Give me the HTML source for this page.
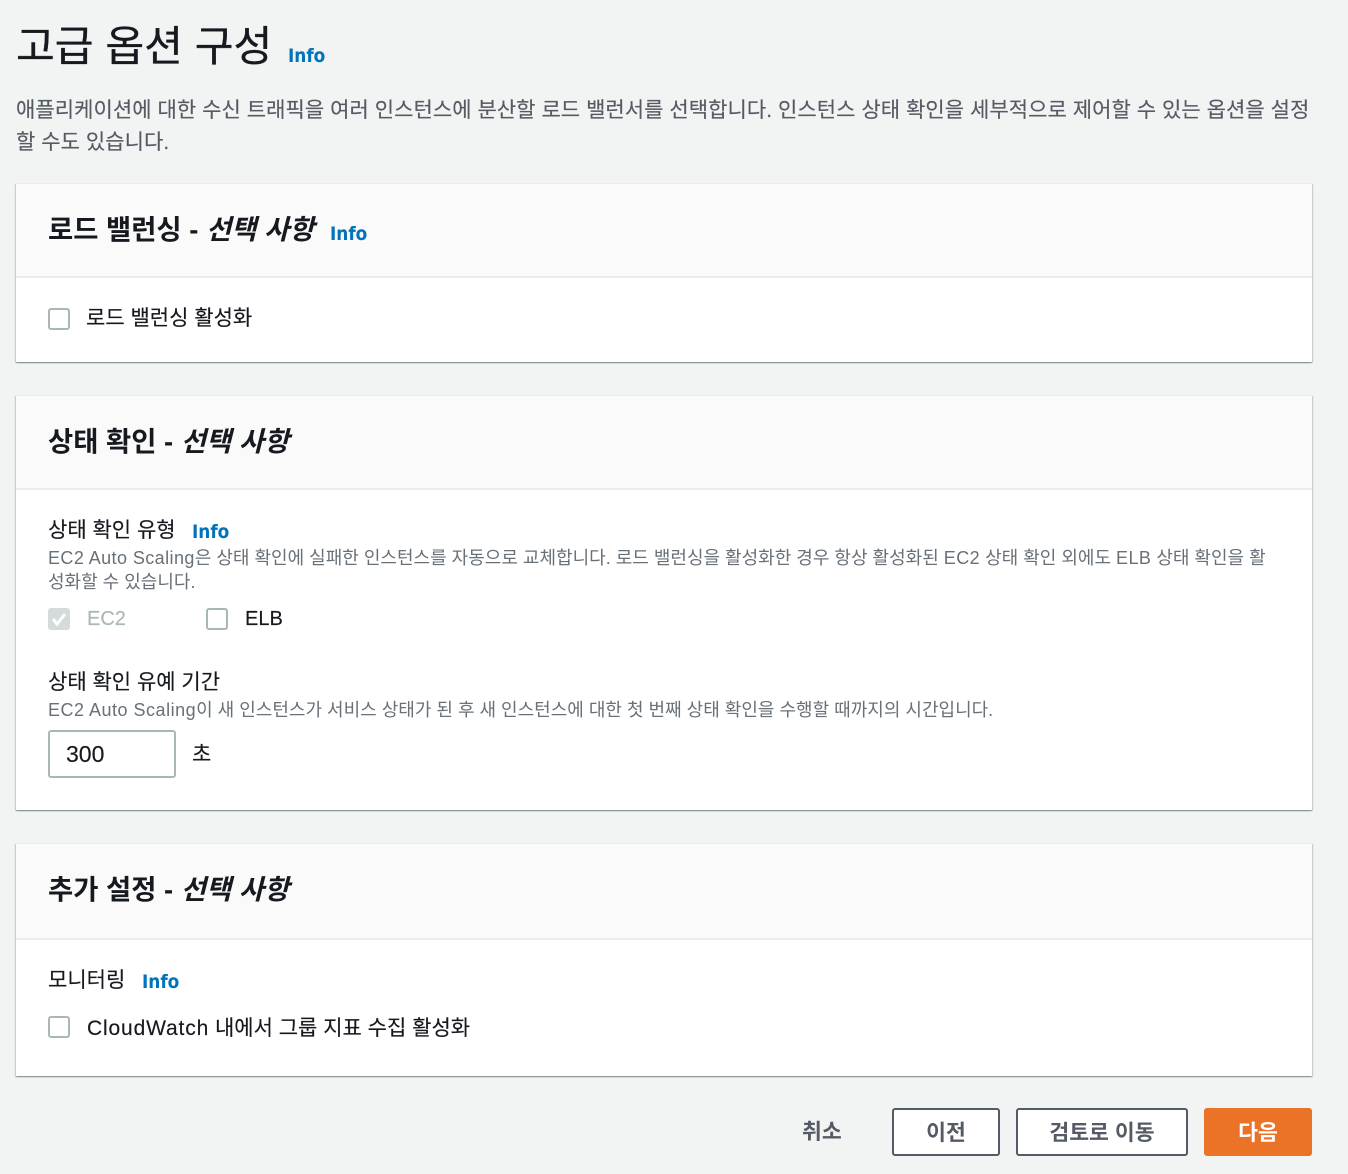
<!DOCTYPE html>
<html lang="ko"><head><meta charset="utf-8">
<style>
html,body{margin:0;padding:0;width:1348px;height:1174px;overflow:hidden;background:#f2f3f3}
body{position:relative;font-family:"Liberation Sans","Noto Sans CJK KR",sans-serif;color:#16191f}
.t{position:absolute;white-space:nowrap;line-height:32px}
.info{color:#0073bb;font-weight:700;font-family:"DejaVu Sans","Liberation Sans",sans-serif;font-stretch:condensed;font-size:18.8px}
.d{color:#545b64;font-size:21px;letter-spacing:.05px;-webkit-text-stroke:.15px #545b64}
.s{color:#687078;font-size:18px;line-height:24px}
.s b{font-weight:400;letter-spacing:.42px}
.l{font-size:21px;-webkit-text-stroke:.15px currentColor}
.l b{font-weight:400;letter-spacing:.85px}
.e{font-size:20px}
.h{font-size:27.4px;font-weight:700}
.h i{font-style:italic}
.card{position:absolute;left:16px;width:1296px;background:#fff;box-shadow:0 1px 1px 0 rgba(0,28,36,.3),1px 1px 1px 0 rgba(0,28,36,.15),-1px 1px 1px 0 rgba(0,28,36,.15);border-top:1px solid #eaeded;box-sizing:border-box}
.head{position:absolute;left:0;top:0;right:0;background:#fafafa;border-bottom:2px solid #eaeded;box-sizing:border-box}
.cb{position:absolute;width:22px;height:22px;box-sizing:border-box;border:2px solid #aab7b8;border-radius:3px;background:#fff}
.btn{position:absolute;top:1108px;height:48px;box-sizing:border-box;border:2px solid #545b64;border-radius:3px;background:#fff;color:#545b64;font-weight:700;font-size:21.6px;line-height:46px;text-align:center}
</style></head><body>
<div class="t" style="left:16px;top:19px;font-size:42.2px;line-height:56px;color:#16191f;-webkit-text-stroke:.35px #16191f">고급 옵션 구성</div>
<div class="t info" style="left:288px;top:41px">Info</div>
<div class="t d" style="left:16px;top:95px">애플리케이션에 대한 수신 트래픽을 여러 인스턴스에 분산할 로드 밸런서를 선택합니다. 인스턴스 상태 확인을 세부적으로 제어할 수 있는 옵션을 설정</div>
<div class="t d" style="left:16px;top:127px">할 수도 있습니다.</div>

<div class="card" style="top:183px;height:179px"><div class="head" style="height:94px"></div></div>
<div class="t h" style="left:48px;top:214px">로드 밸런싱 - <i>선택 사항</i></div>
<div class="t info" style="left:330px;top:219px">Info</div>
<div class="cb" style="left:48px;top:308px"></div>
<div class="t l" style="left:86px;top:303px">로드 밸런싱 활성화</div>

<div class="card" style="top:395px;height:415px"><div class="head" style="height:94px"></div></div>
<div class="t h" style="left:48px;top:426px">상태 확인 - <i>선택 사항</i></div>
<div class="t l" style="left:48px;top:515px">상태 확인 유형</div>
<div class="t info" style="left:192px;top:517px">Info</div>
<div class="t s" style="left:48px;top:546px"><b>EC2 Auto Scaling</b>은 상태 확인에 실패한 인스턴스를 자동으로 교체합니다. 로드 밸런싱을 활성화한 경우 항상 활성화된 <b>EC2</b> 상태 확인 외에도 <b>ELB</b> 상태 확인을 활</div>
<div class="t s" style="left:48px;top:570px">성화할 수 있습니다.</div>
<div class="cb" style="left:48px;top:608px;background:#d5dbdb;border-color:#d5dbdb"><svg width="18" height="18" viewBox="0 0 18 18" style="position:absolute;left:0;top:0"><path d="M3 9l4 5 8-10" fill="none" stroke="#fff" stroke-width="3"/></svg></div>
<div class="t l e" style="left:87px;top:603px;color:#aab7b8">EC2</div>
<div class="cb" style="left:206px;top:608px"></div>
<div class="t l e" style="left:245px;top:603px">ELB</div>
<div class="t l" style="left:48px;top:667px">상태 확인 유예 기간</div>
<div class="t s" style="left:48px;top:698px"><b style="letter-spacing:.5px">EC2 Auto Scaling</b>이 새 인스턴스가 서비스 상태가 된 후 새 인스턴스에 대한 첫 번째 상태 확인을 수행할 때까지의 시간입니다.</div>
<div style="position:absolute;left:48px;top:730px;width:128px;height:48px;box-sizing:border-box;border:2px solid #aab7b8;border-radius:3px;background:#fff"></div>
<div class="t l" style="left:66px;top:738px;font-size:23px">300</div>
<div class="t l" style="left:192px;top:739px">초</div>

<div class="card" style="top:843px;height:233px"><div class="head" style="height:96px"></div></div>
<div class="t h" style="left:48px;top:874px">추가 설정 - <i>선택 사항</i></div>
<div class="t l" style="left:48px;top:965px">모니터링</div>
<div class="t info" style="left:142px;top:967px">Info</div>
<div class="cb" style="left:48px;top:1016px"></div>
<div class="t l" style="left:87px;top:1013px"><b>CloudWatch</b> 내에서 그룹 지표 수집 활성화</div>

<div class="t" style="left:802px;top:1116px;font-size:21.6px;font-weight:700;color:#545b64">취소</div>
<div class="btn" style="left:892px;width:108px">이전</div>
<div class="btn" style="left:1016px;width:172px">검토로 이동</div>
<div class="btn" style="left:1204px;width:108px;background:#eb7328;border-color:#eb7328;color:#fff">다음</div>
</body></html>
